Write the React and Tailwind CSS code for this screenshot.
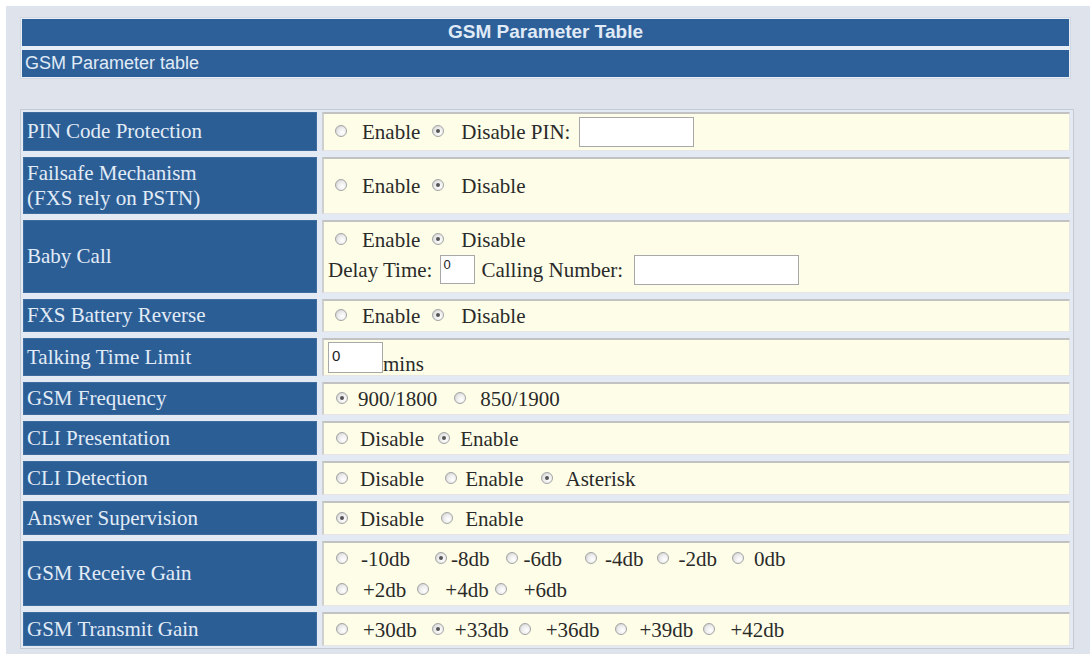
import clsx from 'clsx'

const Radio = ({ checked, className }) => (
  <span
    className={clsx(
      'mb-[2px] inline-flex h-[12px] w-[12px] shrink-0 items-center justify-center rounded-full border border-[#a4a4a4] bg-[radial-gradient(circle_at_65%_65%,#ffffff_0%,#ececec_50%,#c4c4c4_100%)]',
      className
    )}
  >
    {checked && <span className="h-[4px] w-[4px] rounded-full bg-[#555]" />}
  </span>
)

const Opt = ({ label, checked, rm = 'ml-[12px]', tm = 'ml-[15px]' }) => (
  <>
    <Radio checked={checked} className={rm} />
    <span className={clsx('whitespace-nowrap', tm)}>{label}</span>
  </>
)

const Box = ({ className, value }) => (
  <div className={clsx('shrink-0 border border-[#a8a8a8] bg-white font-["Liberation_Sans",sans-serif] leading-none text-[#222]', className)}>
    {value}
  </div>
)

const Row = ({ label, h, children }) => (
  <>
    <div className={clsx('flex items-center border border-[#3f6c9e] bg-[#2c5e96] pl-[3px] text-[21px] leading-[25px] text-[#e2ecf7]', h)}>
      {label}
    </div>
    <div className={clsx('flex items-center border-t-2 border-l-2 border-t-[#c2c2c2] border-l-[#cfcfcf] border-r border-b border-r-[#e6e6e6] border-b-[#e6e6e6] bg-[#fefee8] text-[21px] leading-[24px] text-[#2a2a2a]', h)}>
      {children}
    </div>
  </>
)

export default function App() {
  return (
    <div className="flex h-[654px] w-[1090px] overflow-hidden bg-white pl-[6px] pt-[6px]">
      <div className="flex-1 bg-[#dfe4ec] pl-[14px] pt-[11px]">
        {/* Header */}
        <div className="flex w-[1051px] flex-col gap-[4px] border border-[#d2d8e1] bg-[#e8eef6] p-[1px] font-['Liberation_Sans',sans-serif] text-[#e0ebf7]">
          <div className="flex h-[27px] items-center justify-center bg-[#2d6098] text-[19px] font-bold">GSM Parameter Table</div>
          <div className="flex h-[27px] items-center bg-[#2d6098] pl-[3px] text-[18px]">GSM Parameter table</div>
        </div>

        {/* Parameters */}
        <div className="mt-[30px] w-[1054px] border border-[#c6cbd3] bg-[#e4eaf3] p-[2px] font-['Liberation_Serif',serif]">
          <div className="grid grid-cols-[294px_748px] gap-x-[5px] gap-y-[6px]">
            <Row label="PIN Code Protection" h="h-[39px]">
              <Opt label="Enable" rm="ml-[11px]" tm="ml-[15px]" />
              <Opt label="Disable PIN:" checked rm="ml-[12px]" tm="ml-[17px]" />
              <Box className="ml-[9px] h-[30px] w-[115px]" />
            </Row>

            <Row label={<span>Failsafe Mechanism<br />(FXS rely on PSTN)</span>} h="h-[57px]">
              <Opt label="Enable" rm="ml-[11px]" tm="ml-[15px]" />
              <Opt label="Disable" checked rm="ml-[12px]" tm="ml-[17px]" />
            </Row>

            <Row label="Baby Call" h="h-[73px]">
              <div className="flex h-full flex-col pt-[4px]">
                <div className="flex h-[28px] items-center">
                  <Opt label="Enable" rm="ml-[11px]" tm="ml-[15px]" />
                  <Opt label="Disable" checked rm="ml-[12px]" tm="ml-[17px]" />
                </div>
                <div className="flex h-[31px] items-center">
                  <span className="ml-[4px] whitespace-nowrap">Delay Time:</span>
                  <Box className="ml-[8px] h-[29px] w-[35px] pl-[2px] pt-[2px] text-[13px]" value="0" />
                  <span className="ml-[6px] whitespace-nowrap">Calling Number:</span>
                  <Box className="ml-[11px] h-[30px] w-[165px]" />
                </div>
              </div>
            </Row>

            <Row label="FXS Battery Reverse" h="h-[33px]">
              <Opt label="Enable" rm="ml-[11px]" tm="ml-[15px]" />
              <Opt label="Disable" checked rm="ml-[12px]" tm="ml-[17px]" />
            </Row>

            <Row label="Talking Time Limit" h="h-[38px]">
              <Box className="ml-[4px] h-[31px] w-[55px] pl-[3px] pt-[5px] text-[15px]" value="0" />
              <span className="mt-[12px]">mins</span>
            </Row>

            <Row label="GSM Frequency" h="h-[33px]">
              <Opt label="900/1800" checked tm="ml-[10px]" />
              <Opt label="850/1900" rm="ml-[17px]" tm="ml-[14px]" />
            </Row>

            <Row label="CLI Presentation" h="h-[34px]">
              <Opt label="Disable" tm="ml-[12px]" />
              <Opt label="Enable" checked rm="ml-[14px]" tm="ml-[10px]" />
            </Row>

            <Row label="CLI Detection" h="h-[34px]">
              <Opt label="Disable" tm="ml-[12px]" />
              <Opt label="Enable" rm="ml-[21px]" tm="ml-[8px]" />
              <Opt label="Asterisk" checked rm="ml-[18px]" tm="ml-[12px]" />
            </Row>

            <Row label="Answer Supervision" h="h-[34px]">
              <Opt label="Disable" checked tm="ml-[12px]" />
              <Opt label="Enable" rm="ml-[17px]" tm="ml-[12px]" />
            </Row>

            <Row label="GSM Receive Gain" h="h-[65px]">
              <div className="flex h-full flex-col pt-[1px]">
                <div className="flex h-[32px] items-center">
                  <Opt label="-10db" tm="ml-[13px]" />
                  <Opt label="-8db" checked rm="ml-[25px]" tm="ml-[4px]" />
                  <Opt label="-6db" rm="ml-[16px]" tm="ml-[6px]" />
                  <Opt label="-4db" rm="ml-[23px]" tm="ml-[8px]" />
                  <Opt label="-2db" rm="ml-[13px]" tm="ml-[10px]" />
                  <Opt label="0db" rm="ml-[15px]" tm="ml-[10px]" />
                </div>
                <div className="flex h-[32px] items-center">
                  <Opt label="+2db" tm="ml-[15px]" />
                  <Opt label="+4db" rm="ml-[11px]" tm="ml-[16px]" />
                  <Opt label="+6db" rm="ml-[6px]" tm="ml-[17px]" />
                </div>
              </div>
            </Row>

            <Row label="GSM Transmit Gain" h="h-[34px]">
              <Opt label="+30db" tm="ml-[15px]" />
              <Opt label="+33db" checked rm="ml-[15px]" tm="ml-[11px]" />
              <Opt label="+36db" rm="ml-[10px]" tm="ml-[15px]" />
              <Opt label="+39db" rm="ml-[15px]" tm="ml-[13px]" />
              <Opt label="+42db" rm="ml-[10px]" tm="ml-[15px]" />
            </Row>
          </div>
        </div>
      </div>
    </div>
  )
}
